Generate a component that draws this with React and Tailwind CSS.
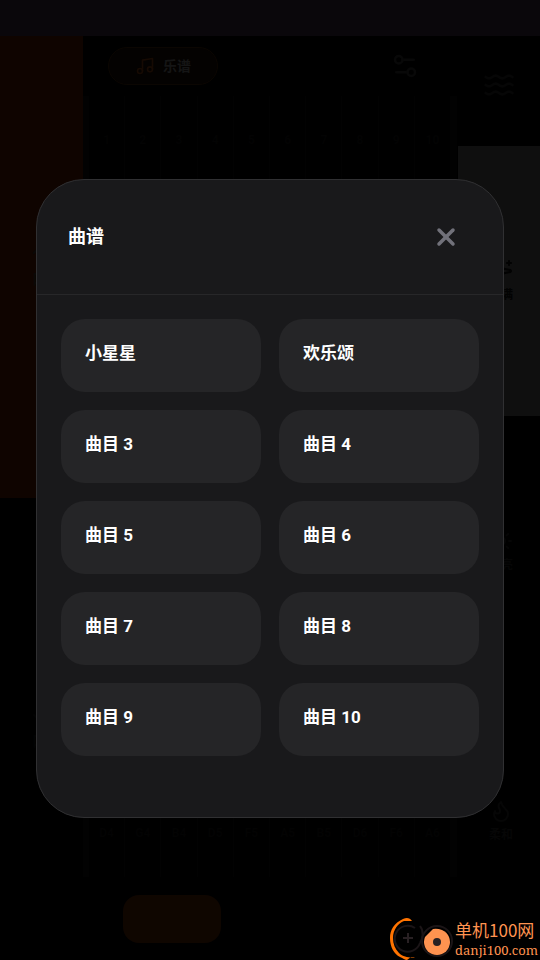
import { useState } from 'react';
import { ArrowDown, ArrowUp, Flame, Music, Settings2, Sparkles, Sun, Waves, X } from 'lucide-react';

const songs = ['小星星', '欢乐颂', '曲目 3', '曲目 4', '曲目 5', '曲目 6', '曲目 7', '曲目 8', '曲目 9', '曲目 10'];

const lanes = [
  { number: 1, note: 'D4' },
  { number: 2, note: 'G4' },
  { number: 3, note: 'B4' },
  { number: 4, note: 'D5' },
  { number: 5, note: 'F5' },
  { number: 6, note: 'A5' },
  { number: 7, note: 'B5' },
  { number: 8, note: 'D6' },
  { number: 9, note: 'F6' },
  { number: 10, note: 'A6' },
];

const moods = [
  { label: '饱满', icon: Sparkles, style: 'bg-[#0f0f0f] text-[#020202]' },
  { label: '明亮', icon: Sun, style: 'text-[#060606]' },
  { label: '柔和', icon: Flame, style: 'text-[#060606]' },
];

// Instrument page that sits dimmed behind the dialog
function Instrument() {
  return (
    <div className="flex min-h-screen flex-col">
      <div className="h-9 bg-[#0a070b]" />
      <div className="flex flex-1">
        <aside className="flex w-[83px] flex-col text-lg font-bold">
          <button className="flex flex-1 flex-col items-center justify-center bg-[#0f0400] text-[#0a0806]">
            <ArrowUp size={28} />
            吸
          </button>
          <button className="flex flex-1 flex-col items-center justify-center text-[#030303]">
            <ArrowDown size={28} />
            呼
          </button>
        </aside>

        <main className="flex flex-1 flex-col">
          <div className="flex h-15 items-center justify-between pr-[38px] pl-[25px]">
            <button className="flex h-[38px] w-[110px] items-center justify-center gap-2 rounded-full border border-[#0b0602] bg-[#040201] text-sm font-bold text-[#151515]">
              <Music size={20} className="text-[#160a03]" />
              乐谱
            </button>
            <button className="text-[#080808]" aria-label="设置">
              <Settings2 size={30} />
            </button>
          </div>
          <div className="mr-px flex flex-1 border-x-[6px] border-[#020202]">
            {lanes.map((lane) => (
              <div
                key={lane.number}
                className="flex flex-1 flex-col items-center justify-between border-r border-[#020202] py-9 text-xs font-bold text-[#030303]"
              >
                <span>{lane.number}</span>
                <span>{lane.note}</span>
              </div>
            ))}
          </div>
          <div className="flex h-[83px] items-center pl-10">
            <button className="h-12 w-[98px] rounded-2xl bg-[#0f0600]" aria-label="播放" />
          </div>
        </main>

        <aside className="flex w-[82px] flex-col pb-1">
          <div className="flex h-[110px] items-center justify-center pb-3 text-[#060606]">
            <Waves size={32} />
          </div>
          {moods.map(({ label, icon: Icon, style }) => (
            <button
              key={label}
              className={`flex flex-1 flex-col items-center justify-center gap-1 pl-1 text-xs font-bold ${style}`}
            >
              <Icon size={24} />
              {label}
            </button>
          ))}
        </aside>
      </div>
    </div>
  );
}

function Watermark() {
  return (
    <div className="absolute right-0 bottom-0 flex items-end font-['Noto_Sans_CJK_SC',sans-serif] text-[#ff9350]">
      <svg width="66" height="44" viewBox="0 0 66 44" fill="none">
        <path
          d="M23 5C21 2 18 1 14 3C5 7 1 14 1 22C1 31 5 38 11 41C14 42 16 44 18 44L22 41L26 41C24 42 15 42 10 37C6 33 4 28 4 22C4 14 9 7 15 5Z"
          fill="#ff7300"
        />
        <path d="M26 12A13 13 0 1 0 31 27" stroke="#1b1517" strokeWidth="2" />
        <path d="M14 22h10M19 17v10" stroke="#282023" strokeWidth="2" />
        <path d="M31 10c4 5 3 12 0 17" stroke="#1b1517" strokeWidth="2" />
        <circle cx="48" cy="25" r="15" stroke="#1b1517" strokeWidth="2" />
        <path d="M44 13Q48 12 53 14A13 13 0 1 1 36 21Z" fill="#ff9350" />
        <circle cx="48" cy="26" r="4" fill="#282023" />
      </svg>
      <div className="pr-0.5">
        <p className="text-[17px] leading-5">单机100网</p>
        <p className="font-['Noto_Serif',serif] text-[13px] leading-5">danji100.com</p>
      </div>
    </div>
  );
}

function App() {
  const [open, setOpen] = useState(true);

  return (
    <div className="relative min-h-screen overflow-hidden bg-black font-[Roboto,'Noto_Sans_CJK_SC',sans-serif]">
      <Instrument />
      {open && (
        <div className="absolute inset-0 flex items-center justify-center px-9 pt-9">
          <div
            role="dialog"
            aria-labelledby="songs-title"
            className="w-full rounded-[48px] border border-[#303032] bg-[#19191b] text-white"
          >
            <div className="flex items-center justify-between border-b border-[#272729] px-[31px] py-[35px]">
              <h2 id="songs-title" className="text-lg font-bold">曲谱</h2>
              <button
                onClick={() => setOpen(false)}
                className="flex h-11 w-[52px] items-center justify-center text-[#71717a]"
                aria-label="关闭"
              >
                <X size={28} strokeWidth={3} />
              </button>
            </div>
            <div className="grid grid-cols-2 gap-[18px] px-6 pt-6 pb-[61px]">
              {songs.map((song) => (
                <button
                  key={song}
                  className="rounded-3xl bg-[#252527] px-6 pt-[22px] pb-[27px] text-left text-[17px] leading-6 font-bold"
                >
                  {song}
                </button>
              ))}
            </div>
          </div>
        </div>
      )}
      <Watermark />
    </div>
  );
}

export default App;
